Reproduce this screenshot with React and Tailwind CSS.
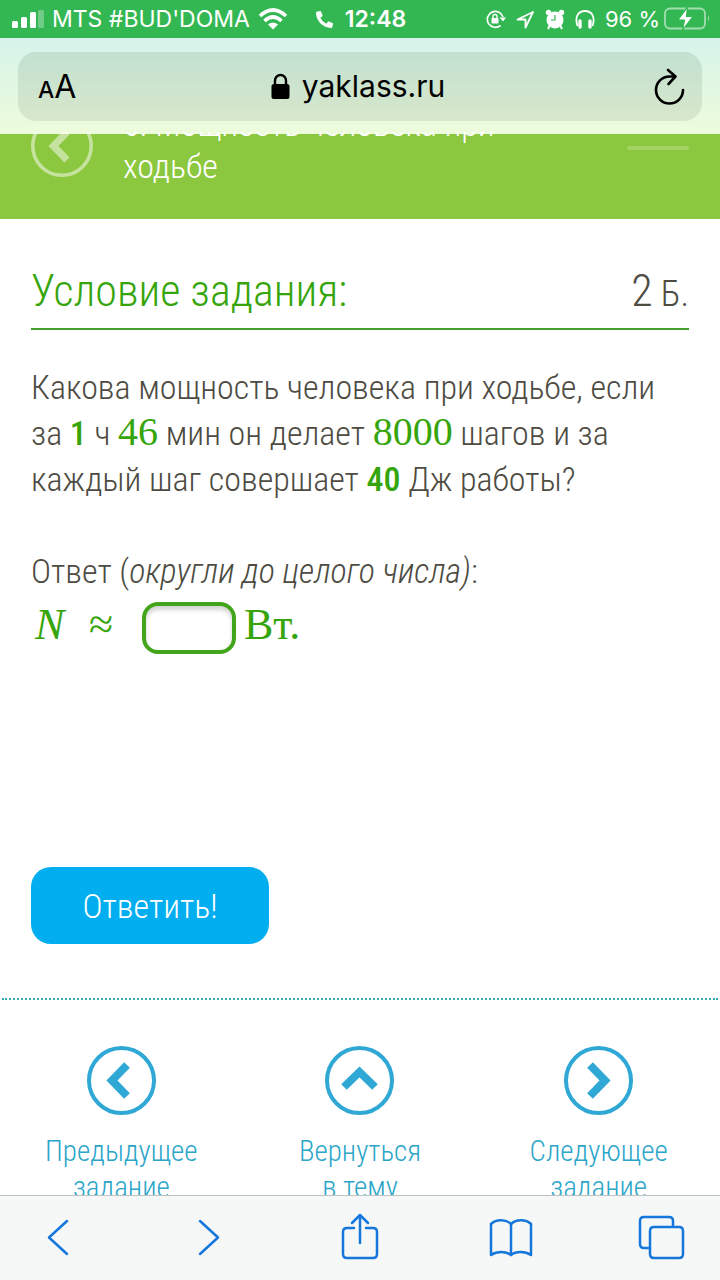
import { FaPhoneAlt } from 'react-icons/fa'
import clsx from 'clsx'

const condensed = 'font-["Roboto_Condensed","Liberation_Sans_Narrow",Roboto,sans-serif] font-light'
const serif = 'font-["Liberation_Serif",serif] text-[#36a50b]'

const chevrons = {
  left: 'M40 19 L25 34.500 L40 50',
  up: 'M19 41 L34.500 26 L50 41',
  right: 'M26 19 L41 34.500 L26 50',
}

function CircleArrow({ dir, className }) {
  return (
    <svg viewBox="0 0 69 69" fill="none" stroke="currentColor" className={className} aria-hidden="true">
      <circle cx="34.500" cy="34.500" r="32.500" strokeWidth="4" />
      <path d={chevrons[dir]} strokeWidth="8" />
    </svg>
  )
}

function SignalIcon() {
  return (
    <svg width="32" height="18" viewBox="0 0 32 18" fill="currentColor" aria-hidden="true">
      <rect x="0" y="11" width="6" height="7" rx="1.500" />
      <rect x="9" y="7" width="6" height="11" rx="1.500" />
      <rect x="18" y="2" width="6" height="16" rx="1.500" />
      <rect x="26" y="0" width="6" height="18" rx="1.500" opacity="0.3" />
    </svg>
  )
}

function WifiIcon() {
  return (
    <svg width="30" height="22" viewBox="0 0 30 22" fill="none" stroke="currentColor" strokeWidth="3.600" aria-hidden="true">
      <path d="M2 8 Q15 -4 28 8" />
      <path d="M6.500 13 Q15 5 23.500 13" />
      <path d="M10 16.500 Q15 12.500 20 16.500 L15 21.500 Z" fill="currentColor" stroke="none" />
    </svg>
  )
}

function RotationLockIcon() {
  return (
    <svg width="20" height="20" viewBox="0 0 20 20" fill="none" stroke="currentColor" strokeWidth="1.700" aria-hidden="true">
      <path d="M14.500 16.500 A8 8 0 1 1 17 8" />
      <path d="M13.500 8.500 H20 L17 12.500 Z" fill="currentColor" stroke="none" />
      <rect x="5.500" y="9" width="7" height="5.500" rx="0.800" fill="currentColor" stroke="none" />
      <path d="M7 9.500 V7.500 A2 2 0 0 1 11 7.500 V9.500" strokeWidth="1.400" />
    </svg>
  )
}

function LocationIcon() {
  return (
    <svg width="19" height="19" viewBox="0 0 19 19" fill="none" stroke="currentColor" strokeWidth="1.800" strokeLinejoin="round" aria-hidden="true">
      <path d="M17 2 L1.500 9.500 H9.500 V17.500 Z" />
    </svg>
  )
}

function AlarmIcon() {
  return (
    <svg width="20" height="21" viewBox="0 0 20 21" fill="currentColor" aria-hidden="true">
      <circle cx="10" cy="11" r="8.500" />
      <circle cx="3.500" cy="3.500" r="2.700" />
      <circle cx="16.500" cy="3.500" r="2.700" />
      <path d="M5 16 L3 20 M15 16 L17 20" stroke="currentColor" strokeWidth="2" />
      <path d="M10 6 V11 H6" fill="none" stroke="#33b752" strokeWidth="1.200" />
    </svg>
  )
}

function HeadphonesIcon() {
  return (
    <svg width="20" height="20" viewBox="0 0 20 20" fill="none" stroke="currentColor" aria-hidden="true">
      <path d="M2.500 17 C-0.500 8 3 2 10 2 C17 2 20.500 8 17.500 17" strokeWidth="1.800" />
      <path d="M5 12 V18 M15 12 V18" strokeWidth="3.400" strokeLinecap="round" />
    </svg>
  )
}

function BatteryIcon() {
  return (
    <svg width="46" height="24" viewBox="0 0 46 24" fill="none" aria-hidden="true">
      <rect x="1" y="1.500" width="40" height="20" rx="5" stroke="#fff" strokeOpacity="0.55" strokeWidth="1.800" />
      <path d="M44 8.500 Q46 11.500 44 14.500 Z" fill="#fff" fillOpacity="0.6" />
      <path d="M23.500 0 L14 13 H20.500 L18.500 23 L29 9.500 H22.500 Z" fill="#fff" stroke="#33b752" strokeWidth="1.200" />
    </svg>
  )
}

function StatusBar() {
  return (
    <div className="grid h-[38px] grid-cols-[1fr_auto_1fr] items-center bg-[#33b752] pr-2.5 pl-3 font-[Inter,sans-serif] text-[22px] text-white">
      <div className="flex items-center gap-2">
        <SignalIcon />
        <span className="text-[23px] whitespace-nowrap">MTS #BUD'DOMA</span>
        <WifiIcon />
      </div>
      <div className="flex items-center gap-3">
        <FaPhoneAlt size={17} />
        <span className="text-[23px] font-semibold">12:48</span>
      </div>
      <div className="flex items-center justify-end gap-2.5">
        <RotationLockIcon />
        <LocationIcon />
        <AlarmIcon />
        <HeadphonesIcon />
        <span className="flex items-center gap-1 whitespace-nowrap">
          96 % <BatteryIcon />
        </span>
      </div>
    </div>
  )
}

function AddressBar() {
  return (
    <div className="h-24 bg-linear-to-b from-[#d6f3ea] to-[#edfcdb] px-[18px] pt-3.5">
      <div className="grid h-[69px] grid-cols-[1fr_auto_1fr] items-center rounded-[18px] bg-linear-to-b from-[#c3e1d1] to-[#d7e7ca] px-4 font-[Inter,sans-serif] text-black">
        <button type="button" aria-label="Размер текста" className="flex items-baseline justify-self-start pl-1">
          <span className="text-[23px] leading-none font-medium">A</span>
          <span className="text-[32px] leading-none">A</span>
        </button>
        <div className="flex items-center gap-3 pr-1">
          <svg width="19" height="27" viewBox="0 0 19 27" fill="none" aria-hidden="true">
            <rect x="0.500" y="11" width="18" height="15" rx="2.500" fill="#000" />
            <path d="M4 12 V7.500 A5.500 5.500 0 0 1 15 7.500 V12" stroke="#000" strokeWidth="2.400" />
          </svg>
          <span className="text-[30px]">yaklass.ru</span>
        </div>
        <button type="button" aria-label="Обновить" className="justify-self-end">
          <svg width="34" height="38" viewBox="0 0 34 38" fill="none" stroke="#000" strokeWidth="2.600" strokeLinecap="round" strokeLinejoin="round" aria-hidden="true">
            <path d="M31 22 A13.500 13.500 0 1 1 17.500 8.500 H23" />
            <path d="M16 2 L23.500 8.500 L16.500 16" />
          </svg>
        </button>
      </div>
    </div>
  )
}

function TaskHeader() {
  return (
    <header className="flex h-[85px] items-end bg-[#8cc83f]">
      {/* a few pixels of the scrolled title show through the bar above */}
      <div className="flex h-[89px] w-full items-end overflow-hidden px-[31px] text-white">
        <a href="#prev" aria-label="Назад" className="mb-[42px] shrink-0">
          <CircleArrow dir="left" className="size-[62px] opacity-50" />
        </a>
        <h1 className={clsx(condensed, 'mb-8 ml-[30px] w-[420px] text-[34px] leading-[42px]')}>
          6. Мощность человека при ходьбе
        </h1>
        <span className="mb-[69px] ml-auto h-1 w-[62px] rounded-full bg-white/20" />
      </div>
    </header>
  )
}

function Task() {
  return (
    <main className={clsx(condensed, 'px-[31px] text-[34px] leading-[46px] text-[#4d4b42]')}>
      <div className="mt-[41px] flex h-[70px] items-start justify-between border-b-2 border-[#43a02a]">
        <h2 className="text-[44px] leading-[62px] text-[#36a50b]">Условие задания:</h2>
        <p className="text-[36px] leading-[62px]"><span className="text-[44px]">2</span> Б.</p>
      </div>
      <p className="mt-[34px]">
        Какова мощность человека при ходьбе, если за <b className="font-medium text-[#36a50b]">1</b> ч{' '}
        <span className={clsx(serif, 'text-[40px] leading-none font-normal')}>46</span> мин он делает{' '}
        <span className={clsx(serif, 'text-[40px] leading-none font-normal')}>8000</span> шагов и за
        каждый шаг совершает <b className="font-medium text-[#36a50b]">40</b> Дж работы?
      </p>
      <p className="mt-[46px]">
        <label htmlFor="answer">Ответ (<i>округли до целого числа)</i>:</label>
      </p>
      <div className={clsx(serif, 'mt-2 flex h-[52px] items-start text-[44px] leading-[46px] font-normal')}>
        <i className="w-[58px] pl-1">N</i>
        <span className="w-[53px]">≈</span>
        <input
          id="answer"
          type="text"
          className="h-[52px] w-[94px] rounded-[16px] border-4 border-[#43a51c] bg-white px-2 text-center shadow-[inset_0_4px_4px_#d5d5d5] outline-none"
        />
        <span className="ml-2">Вт.</span>
      </div>
      <button type="button" className="mt-[213px] h-[77px] w-[238px] rounded-[20px] bg-[#02aeef] text-white">
        Ответить!
      </button>
    </main>
  )
}

const links = [
  { dir: 'left', label: ['Предыдущее', 'задание'] },
  { dir: 'up', label: ['Вернуться', 'в тему'] },
  { dir: 'right', label: ['Следующее', 'задание'] },
]

function TaskNav() {
  return (
    <nav className="mx-0.5 mt-[54px] grid grid-cols-3 border-t-2 border-dotted border-[#36a9b8] pt-[46px]">
      {links.map(link => (
        <a key={link.dir} href={`#${link.dir}`} className={clsx(condensed, 'flex flex-col items-center text-center text-[29px] leading-9 text-[#2ba6c9]')}>
          <CircleArrow dir={link.dir} className="mb-[18px] size-[69px] text-[#30a8d6]" />
          {link.label.map(line => <span key={line}>{line}</span>)}
        </a>
      ))}
    </nav>
  )
}

const tools = [
  { name: 'Назад', paths: ['M33 8 L15 24.500 L33 41'] },
  { name: 'Вперёд', paths: ['M15 8 L33 24.500 L15 41'] },
  { name: 'Поделиться', paths: ['M18 15 H11 Q7 15 7 19 V41 Q7 45 11 45 H37 Q41 45 41 41 V19 Q41 15 37 15 H30', 'M24 30 V2 M16 10 L24 2 L32 10'] },
  { name: 'Закладки', paths: ['M24 11 C19 6 9 6 4 11 V42 C10 38 19 38 24 42 C29 38 38 38 44 42 V11 C39 6 29 6 24 11 Z', 'M24 11 V42'] },
  { name: 'Вкладки', paths: ['M12 35 H6 Q2 35 2 31 V8 Q2 4 6 4 H31 Q35 4 35 8 V13', 'M16 14 H41 Q45 14 45 18 V41 Q45 45 41 45 H16 Q12 45 12 41 V18 Q12 14 16 14 Z'] },
]

function BrowserToolbar() {
  return (
    <div className="flex h-[85px] shrink-0 justify-between border-t border-[#bfc2c2] bg-[#f6f7f7] px-[34px] pt-[17px] text-[#1577dc]">
      {tools.map(tool => (
        <button key={tool.name} type="button" aria-label={tool.name} className="size-12">
          <svg viewBox="0 0 48 48" fill="none" stroke="currentColor" strokeWidth="2.500" strokeLinecap="round" strokeLinejoin="round" aria-hidden="true">
            {tool.paths.map(d => <path key={d} d={d} />)}
          </svg>
        </button>
      ))}
    </div>
  )
}

export default function App() {
  return (
    <div className="flex h-screen flex-col bg-white">
      <StatusBar />
      <AddressBar />
      <div className="min-h-0 flex-1 [overflow:clip] [overflow-clip-margin:2px]">
        <TaskHeader />
        <Task />
        <TaskNav />
      </div>
      <BrowserToolbar />
    </div>
  )
}
